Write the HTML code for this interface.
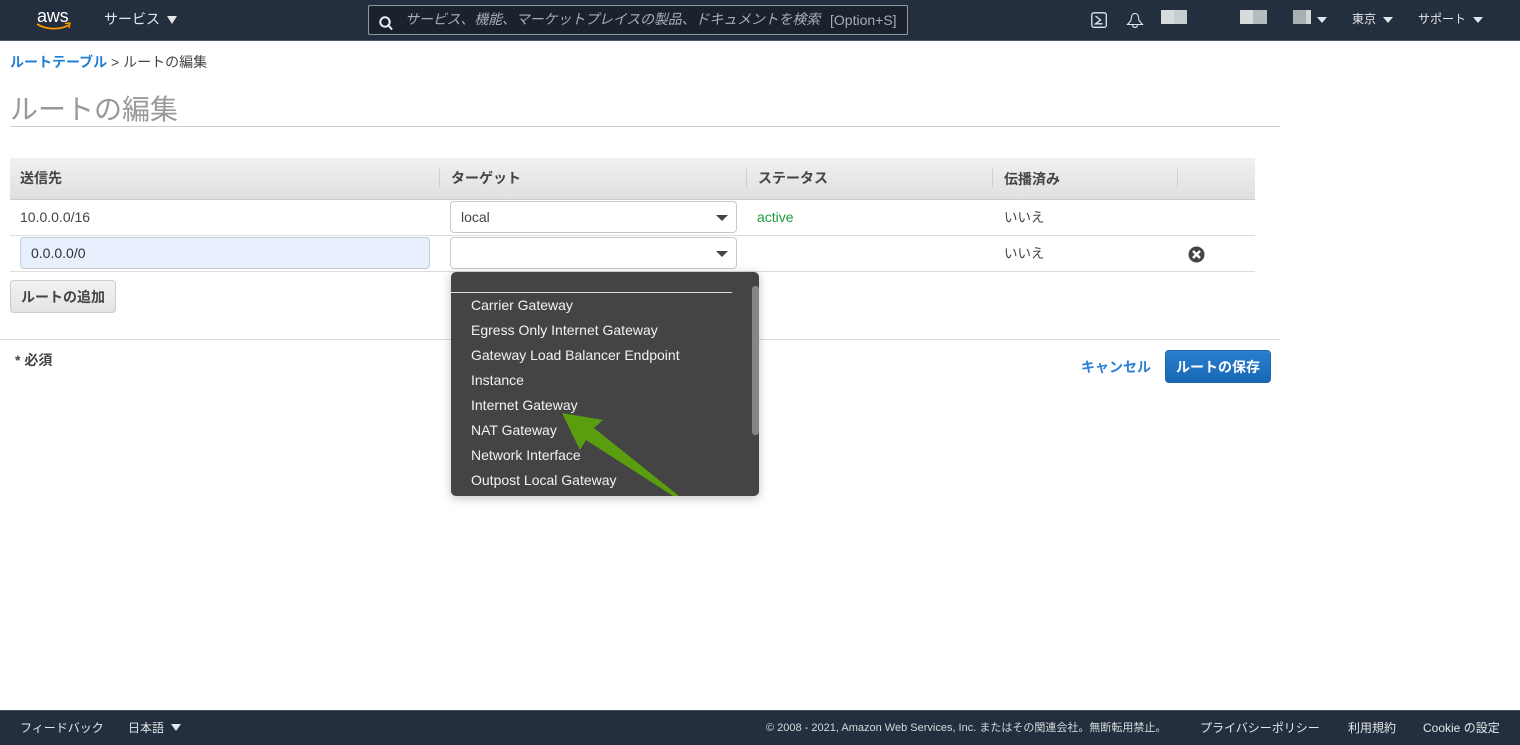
<!DOCTYPE html>
<html lang="ja">
<head>
<meta charset="utf-8">
<title>ルートの編集</title>
<style>
html,body{margin:0;padding:0;width:1520px;height:745px;overflow:hidden;background:#fff}
body{position:relative;font-family:"Liberation Sans","Noto Sans CJK JP",sans-serif;font-size:14px;color:#444}
.a{position:absolute;white-space:nowrap}
.nav{left:0;top:0;width:1520px;height:40px;background:#232f3e;border-bottom:1px solid #4a5563}
.w{color:#e4e7e9;font-size:13px;line-height:18px}
.tri{position:absolute;width:0;height:0;border-left:5px solid transparent;border-right:5px solid transparent;border-top:7px solid #e4e7e9}
.blk{position:absolute}
.th{font-weight:bold;color:#444;font-size:14px;line-height:20px;top:168px}
.sep{position:absolute;top:169px;width:1px;height:19px;background:#cfcfcf}
.line{position:absolute;left:10px;width:1245px;height:1px;background:#ddd}
.sel{position:absolute;left:450px;width:285px;height:30px;border:1px solid #c8c8c8;border-radius:4px;background:#fff}
.car{position:absolute;width:0;height:0;border-left:6px solid transparent;border-right:6px solid transparent;border-top:6px solid #444}
.opt{position:absolute;left:471px;color:#f2f2f2;font-size:14px;line-height:20px;white-space:nowrap}
.foot{left:0;top:710px;width:1520px;height:35px;background:#232f3e;border-top:1px solid #454f5c}
</style>
</head>
<body>
<div class="a nav"></div>
<!-- aws logo -->
<div class="a" style="left:37px;top:7px;color:#fff;font-size:18px;line-height:18px;letter-spacing:-.2px">aws</div>
<svg class="a" style="left:36px;top:22px" width="36" height="9" viewBox="0 0 36 9"><path d="M1 2C10 8 24 8 33 3" fill="none" stroke="#f90" stroke-width="1.7"/><path d="M29 1.500L34 1L33 6" fill="none" stroke="#f90" stroke-width="1.400"/></svg>
<div class="a w" style="left:104px;top:10px;font-size:14px;line-height:19px">サービス</div>
<div class="tri" style="left:167px;top:16px;border-left-width:5.500px;border-right-width:5.500px;border-top-width:8px"></div>
<!-- search -->
<div class="a" style="left:368px;top:5px;width:538px;height:28px;background:#1a222e;border:1px solid #8e98a3;border-radius:2px"></div>
<svg class="a" style="left:378px;top:15px" width="16" height="16" viewBox="0 0 16 16"><circle cx="7" cy="7" r="4.700" fill="none" stroke="#eef0f2" stroke-width="2"/><path d="M10.500 10.500L14 14.500" stroke="#eef0f2" stroke-width="2"/></svg>
<div class="a" style="left:405px;top:10px;color:#a5adb5;font-size:14px;line-height:19px;font-style:italic;letter-spacing:-.15px">サービス、機能、マーケットプレイスの製品、ドキュメントを検索</div>
<div class="a" style="left:830px;top:11px;color:#a5adb5;font-size:14px;line-height:18px">[Option+S]</div>
<!-- right nav -->
<svg class="a" style="left:1090px;top:11px" width="18" height="18" viewBox="0 0 18 18"><rect x="1.800" y="1.800" width="14.500" height="14.500" rx="2" fill="none" stroke="#e4e7e9" stroke-width="1.300"/><path d="M5.500 5L10.500 9L5.500 12.800H12.500" fill="none" stroke="#e4e7e9" stroke-width="1.300"/></svg>
<svg class="a" style="left:1126px;top:11px" width="18" height="18" viewBox="0 0 18 18"><path d="M1.500 13.500L5 9.500C5.500 5 6 2.500 9 2.500C12 2.500 12.500 5 13 9.500L16.500 13.500Z" fill="none" stroke="#e4e7e9" stroke-width="1.100"/><path d="M6.500 14C7 17.300 11 17.300 11.500 14" fill="none" stroke="#e4e7e9" stroke-width="1.100"/></svg>
<div class="blk" style="left:1161px;top:10px;width:13px;height:14px;background:#d6dcdc"></div>
<div class="blk" style="left:1174px;top:10px;width:13px;height:14px;background:#c6cfcf"></div>
<div class="blk" style="left:1240px;top:10px;width:13px;height:14px;background:#d6dcdc"></div>
<div class="blk" style="left:1253px;top:10px;width:14px;height:14px;background:#b4bcc0"></div>
<div class="blk" style="left:1293px;top:10px;width:13px;height:14px;background:#a8b0b3"></div>
<div class="blk" style="left:1306px;top:10px;width:5px;height:14px;background:#d0d5d5"></div>
<div class="tri" style="left:1317px;top:17px;border-top-width:6px"></div>
<div class="a w" style="left:1352px;top:10px;font-size:12px">東京</div>
<div class="tri" style="left:1383px;top:17px;border-top-width:6px"></div>
<div class="a w" style="left:1418px;top:10px;font-size:12px">サポート</div>
<div class="tri" style="left:1473px;top:17px;border-top-width:6px"></div>

<!-- breadcrumb -->
<div class="a" style="left:10px;top:52px;line-height:20px;color:#1f7fd6;font-weight:bold;font-size:14px">ルートテーブル</div>
<div class="a" style="left:111px;top:52px;line-height:20px;color:#444;font-size:14px">&gt; ルートの編集</div>
<div class="a" style="left:10px;top:91px;font-size:28px;line-height:38px;color:#999">ルートの編集</div>
<div class="blk" style="left:10px;top:126px;width:1270px;height:1px;background:#ccc"></div>

<!-- table -->
<div class="blk" style="left:10px;top:158px;width:1245px;height:41px;background:linear-gradient(#f0f0f0,#e0e0e0);border-bottom:1px solid #ccc"></div>
<div class="a th" style="left:20px">送信先</div>
<div class="sep" style="left:439px"></div>
<div class="a th" style="left:451px">ターゲット</div>
<div class="sep" style="left:746px"></div>
<div class="a th" style="left:758px">ステータス</div>
<div class="a th" style="left:1004px;top:169px">伝播済み</div>
<div class="sep" style="left:992px"></div>
<div class="sep" style="left:1177px"></div>
<div class="line" style="top:235px"></div>
<div class="line" style="top:271px"></div>
<div class="a" style="left:20px;top:207px;line-height:20px;color:#444">10.0.0.0/16</div>
<div class="sel" style="top:201px"></div>
<div class="a" style="left:461px;top:207px;line-height:20px;color:#444">local</div>
<div class="car" style="left:716px;top:215px"></div>
<div class="a" style="left:757px;top:207px;line-height:20px;color:#1d9c3c">active</div>
<div class="a" style="left:1004px;top:208px;line-height:20px;color:#444;font-size:13.500px">いいえ</div>
<div class="blk" style="left:20px;top:237px;width:408px;height:30px;background:#e8f0fe;border:1px solid #c6ccd6;border-radius:4px"></div>
<div class="a" style="left:31px;top:243px;line-height:20px;color:#333">0.0.0.0/0</div>
<div class="sel" style="top:237px"></div>
<div class="car" style="left:716px;top:251px"></div>
<div class="a" style="left:1004px;top:244px;line-height:20px;color:#444;font-size:13.500px">いいえ</div>
<svg class="a" style="left:1188px;top:246px" width="17" height="17" viewBox="0 0 17 17"><circle cx="8.500" cy="8.500" r="8" fill="#444"/><path d="M5 5L12 12M12 5L5 12" stroke="#fff" stroke-width="2.500"/></svg>

<!-- add route -->
<div class="blk" style="left:10px;top:280px;width:104px;height:31px;background:linear-gradient(#f2f2f2,#e4e4e4);border:1px solid #ccc;border-radius:4px"></div>
<div class="a" style="left:21px;top:287px;line-height:20px;font-weight:bold;font-size:14px;color:#444">ルートの追加</div>
<div class="blk" style="left:0;top:339px;width:1280px;height:1px;background:#ddd"></div>
<div class="a" style="left:15px;top:350px;line-height:20px;font-weight:bold;font-size:14px;color:#444">* 必須</div>
<div class="a" style="left:1081px;top:357px;line-height:20px;font-weight:bold;font-size:14px;color:#2b80d4">キャンセル</div>
<div class="blk" style="left:1165px;top:350px;width:104px;height:31px;background:linear-gradient(#2a7fd0,#1767b5);border:1px solid #1d68b0;border-radius:4px"></div>
<div class="a" style="left:1176px;top:357px;line-height:20px;font-weight:bold;font-size:14px;color:#fff">ルートの保存</div>

<!-- dropdown -->
<div class="blk" style="left:451px;top:272px;width:308px;height:224px;background:#444;border-radius:5px;box-shadow:0 2px 10px rgba(0,0,0,.25)"></div>
<div class="blk" style="left:451px;top:292px;width:281px;height:1px;background:#ddd"></div>
<div class="blk" style="left:752px;top:286px;width:7px;height:149px;background:#868686;border-radius:3px"></div>
<div class="opt" style="top:295px">Carrier Gateway</div>
<div class="opt" style="top:320px">Egress Only Internet Gateway</div>
<div class="opt" style="top:345px">Gateway Load Balancer Endpoint</div>
<div class="opt" style="top:370px">Instance</div>
<div class="opt" style="top:395px">Internet Gateway</div>
<div class="opt" style="top:420px">NAT Gateway</div>
<div class="opt" style="top:445px">Network Interface</div>
<div class="opt" style="top:470px">Outpost Local Gateway</div>
<svg class="a" style="left:555px;top:405px" width="130" height="95" viewBox="0 0 130 95"><path d="M7 8L48 15L39 23L124 91L118 91L31 35L25 45Z" fill="#5a9e0f"/></svg>

<!-- footer -->
<div class="a foot"></div>
<div class="a w" style="left:20px;top:719px;font-size:12px">フィードバック</div>
<div class="a w" style="left:128px;top:719px;font-size:12px">日本語</div>
<div class="tri" style="left:171px;top:724px;border-top-width:7px"></div>
<div class="a" style="left:766px;top:720px;color:#d5d9dc;font-size:11px;line-height:17px">© 2008 - 2021, Amazon Web Services, Inc. またはその関連会社。無断転用禁止。</div>
<div class="a w" style="left:1200px;top:719px;font-size:12px">プライバシーポリシー</div>
<div class="a w" style="left:1348px;top:719px;font-size:12px">利用規約</div>
<div class="a w" style="left:1423px;top:719px;font-size:12px">Cookie の設定</div>
</body>
</html>
